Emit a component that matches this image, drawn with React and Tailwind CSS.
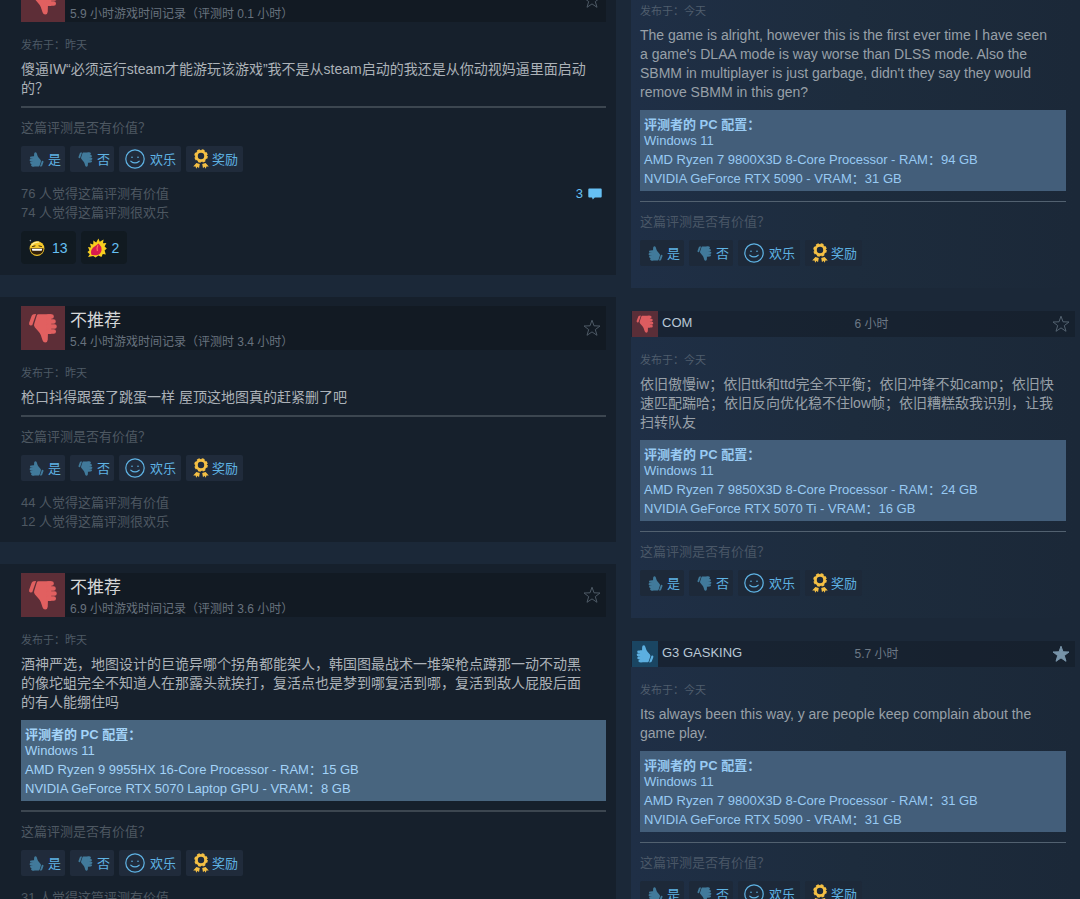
import React from 'react';
import clsx from 'clsx';

const mainReviews = [
  {
    id: 'm1',
    played: '5.9 小时游戏时间记录（评测时 0.1 小时）',
    posted: '昨天',
    text: '傻逼IW“必须运行steam才能游玩该游戏”我不是从steam启动的我还是从你动视妈逼里面启动\n的？',
    helpful: 76,
    funny: 74,
    comments: 3,
    awards: [{ kind: 'laugh', count: 13 }, { kind: 'fire', count: 2 }],
  },
  {
    id: 'm2',
    played: '5.4 小时游戏时间记录（评测时 3.4 小时）',
    posted: '昨天',
    text: '枪口抖得跟塞了跳蛋一样 屋顶这地图真的赶紧删了吧',
    helpful: 44,
    funny: 12,
  },
  {
    id: 'm3',
    played: '6.9 小时游戏时间记录（评测时 3.6 小时）',
    posted: '昨天',
    text: '酒神严选，地图设计的巨诡异哪个拐角都能架人，韩国图最战术一堆架枪点蹲那一动不动黑\n的像坨蛆完全不知道人在那露头就挨打，复活点也是梦到哪复活到哪，复活到敌人屁股后面\n的有人能绷住吗',
    specs: ['Windows 11', 'AMD Ryzen 9 9955HX 16-Core Processor - RAM：15 GB', 'NVIDIA GeForce RTX 5070 Laptop GPU - VRAM：8 GB'],
    helpful: 31,
    funny: 8,
  },
];

const sideReviews = [
  {
    id: 's1',
    name: 'Player',
    hours: '6 小时',
    posted: '今天',
    text: "The game is alright, however this is the first ever time I have seen\na game's DLAA mode is way worse than DLSS mode. Also the\nSBMM in multiplayer is just garbage, didn't they say they would\nremove SBMM in this gen?",
    specs: ['Windows 11', 'AMD Ryzen 7 9800X3D 8-Core Processor - RAM：94 GB', 'NVIDIA GeForce RTX 5090 - VRAM：31 GB'],
  },
  {
    id: 's2',
    name: 'COM',
    hours: '6 小时',
    posted: '今天',
    text: '依旧傲慢iw；依旧ttk和ttd完全不平衡；依旧冲锋不如camp；依旧快\n速匹配踹哈；依旧反向优化稳不住low帧；依旧糟糕敌我识别，让我\n扫转队友',
    specs: ['Windows 11', 'AMD Ryzen 7 9850X3D 8-Core Processor - RAM：24 GB', 'NVIDIA GeForce RTX 5070 Ti - VRAM：16 GB'],
  },
  {
    id: 's3',
    name: 'G3 GASKING',
    hours: '5.7 小时',
    posted: '今天',
    up: true,
    starred: true,
    text: 'Its always been this way, y are people keep complain about the\ngame play.',
    specs: ['Windows 11', 'AMD Ryzen 7 9800X3D 8-Core Processor - RAM：31 GB', 'NVIDIA GeForce RTX 5090 - VRAM：31 GB'],
  },
];

const Thumb = ({ up, className }) => (
  <svg viewBox="7 7 31 31" className={clsx(className, up && 'rotate-180')} aria-hidden="true">
    <path d="M12.8 8.2 15.4 8 11.4 19.6 9.4 19.8Q7.5 19.4 8.2 17L10.8 9.8Q11.5 8.2 12.8 8.2Z" fill="currentColor" />
    <path
      d="M17.6 8.2H31V28.6H27.6L27.4 34.6Q27.2 37.4 24.8 37.6Q22.8 37.6 22 35.2L20.2 29.8Q19.4 27.6 17.4 25.6L14 21.6Q12.8 20 13.4 18.4L16.2 9.4Q16.6 8.2 17.6 8.2Z"
      fill="currentColor"
    />
    <g stroke="currentColor" strokeWidth="4.7" strokeLinecap="round">
      <path d="M28 10.6H31.4M28 15.8H33.4M28 21H34.4M28 26.2H33.6" />
    </g>
  </svg>
);

const Smiley = () => (
  <svg viewBox="0 0 20 20" className="size-5" fill="none" stroke="currentColor" aria-hidden="true">
    <circle cx="10" cy="10" r="9.2" strokeWidth="1.2" />
    <circle cx="7" cy="8.2" r="0.8" fill="currentColor" stroke="none" />
    <circle cx="13" cy="8.2" r="0.8" fill="currentColor" stroke="none" />
    <path d="M5.8 12.2Q10 15.6 14.2 12.2" strokeWidth="1.1" strokeLinecap="round" />
  </svg>
);

const Rosette = () => (
  <svg viewBox="0 0 16 20" className="h-5 w-4 text-[#f5c044]" aria-hidden="true">
    <circle cx="8" cy="7" r="4.6" fill="none" stroke="currentColor" strokeWidth="2.8" />
    <circle cx="8" cy="7" r="6" fill="none" stroke="currentColor" strokeWidth="1.6" strokeDasharray="2.8 1.91" />
    <path d="M3.4 14 6.8 15 6 19.2 4.6 17.8 3.2 19.8 2.6 17.5 0.2 17.4Z" fill="currentColor" />
    <path d="M12.6 14 9.2 15 10 19.2 11.4 17.8 12.8 19.8 13.4 17.5 15.8 17.4Z" fill="currentColor" />
  </svg>
);

const Star = ({ filled }) => (
  <svg viewBox="0 0 18 18" className="size-[18px]" aria-hidden="true">
    <path
      d="M9 1.2 11 6.8 17 7 12.3 10.6 14 16.3 9 12.9 4 16.3 5.7 10.6 1 7 7 6.8Z"
      fill={filled ? 'currentColor' : 'none'}
      stroke="currentColor"
      strokeWidth="1"
    />
  </svg>
);

const Laugh = () => (
  <svg viewBox="0 0 20 20" className="size-5" aria-hidden="true">
    <circle cx="10" cy="10.6" r="7.4" fill="#f6c92c" />
    <path d="M4.4 7.4Q7.6 3.4 12 4.2" stroke="#fff0a0" strokeWidth="1.2" fill="none" />
    <path d="M5.2 8.6 8.4 7.8M11.6 7.8 14.8 8.6" stroke="#33210b" strokeWidth="1" />
    <path d="M3.4 10.2H16.6Q16.4 16.6 10 16.7Q3.6 16.6 3.4 10.2Z" fill="#33210b" />
    <path d="M4.8 10.7H15.2L14.7 12.7H5.3Z" fill="#fff" />
    <circle cx="3.4" cy="2.6" r="0.8" fill="#8b949c" />
  </svg>
);

const Fire = () => (
  <svg viewBox="0 0 20 20" className="size-5" aria-hidden="true">
    <path
      d="M1 19 2.8 16.2 0.4 14 2.4 12.4 1 9 4 9.4 3 5.6 6.2 6.6 6.4 2.4 9.2 4.4 11.4 0.6 12.8 3.8 16.6 1.4 16 5.2 19.4 5 17.6 8.4 19.8 10.6 17.6 12.6 18.8 16.4 15.8 16 14.4 19 11.4 17.6 8.6 19.6 6.2 18Z"
      fill="#f8cf1f"
    />
    <path d="M4.6 17Q2.8 13 6.2 9.6L11.6 5.6Q14.8 8.6 14.6 12Q13.8 16.8 9.4 17.2Z" fill="#d81b50" />
    <path d="M11 7.2Q9.4 9.6 10.4 13" stroke="#ff7a5c" strokeWidth="1.1" fill="none" />
  </svg>
);

const Bubble = () => (
  <svg viewBox="0 0 14 12" className="h-3 w-3.5" fill="currentColor" aria-hidden="true">
    <path d="M1.2 0.4H12.8Q13.7 0.4 13.7 1.4V8.4Q13.7 9.4 12.8 9.4H6.8L4.8 11.6 4 9.4H1.2Q0.3 9.4 0.3 8.4V1.4Q0.3 0.4 1.2 0.4Z" />
  </svg>
);

const StarButton = ({ filled, className }) => (
  <button type="button" aria-label="收藏" className={className}>
    <Star filled={filled} />
  </button>
);

const voteBase = 'flex h-[26px] items-center rounded-xs text-[13px] leading-none text-[#5fb3e4]';

const VoteButtons = ({ side }) => {
  const cls = clsx(voteBase, side ? 'bg-[#1d2939]' : 'bg-[#202b3b]');
  return (
    <div className="mt-[9px] flex gap-[5px]">
      <button type="button" className={clsx(cls, 'gap-1 pr-1 pl-2')}>
        <Thumb up className="size-[15px] text-[#417a9b]" />
        是
      </button>
      <button type="button" className={clsx(cls, 'gap-1 pr-1 pl-2')}>
        <Thumb className="size-[15px] text-[#417a9b]" />
        否
      </button>
      <button type="button" className={clsx(cls, 'gap-[5px] pr-[5px] pl-[6px]')}>
        <Smiley />
        欢乐
      </button>
      <button type="button" className={clsx(cls, 'gap-[3px] pr-[5px] pl-[7px]')}>
        <Rosette />
        奖励
      </button>
    </div>
  );
};

// Shared by both columns: date, text, hardware box and the vote row
const ReviewContent = ({ review, side }) => (
  <>
    <p className={clsx('pt-4 text-[11px] leading-[14px]', side ? 'text-[#4f5d6d]' : 'text-[#4e5a66]')}>
      发布于：{review.posted}
    </p>
    <p className={clsx('mt-2 text-sm leading-[19px] whitespace-pre-line', side ? 'text-[#98a0a8]' : 'text-[#acb2b8]')}>
      {review.text}
    </p>
    {review.specs && (
      <div
        className={clsx(
          'mt-2 mb-[9px] px-1 pt-2 pb-[3px] text-[13px] leading-[19px]',
          side ? 'bg-[#435e7a] text-[#98caf3]' : 'bg-[#48657f] text-[#a3d3f8]'
        )}
      >
        <h4 className="leading-[13px] font-bold">评测者的 PC 配置：</h4>
        {review.specs.map((line) => (
          <p key={line}>{line}</p>
        ))}
      </div>
    )}
    <hr className={clsx(side ? 'mt-[10px] border-t border-[#526170]' : 'mt-2 border-t-2 border-[#3c4650]')} />
    <p className={clsx('mt-[10px] text-[13px] leading-[19px]', side ? 'text-[#4a5767]' : 'text-[#4e5862]')}>
      这篇评测是否有价值？
    </p>
    <VoteButtons side={side} />
  </>
);

const MainReview = ({ review }) => (
  <article className="bg-[#16202c] pt-[9px] pr-[10px] pb-[11px] pl-[21px]">
    <header className="flex h-11 bg-[#121a23]">
      <div className="flex size-11 items-center justify-center bg-[#5d2e37]">
        <Thumb className="size-[30px] text-[#e16060]" />
      </div>
      <div className="flex-1 pt-1 pl-[5px]">
        <h3 className="text-[17px] leading-[22px] text-[#d6d7d8]">不推荐</h3>
        <p className="text-xs leading-[20px] text-[#68727e]">{review.played}</p>
      </div>
      <StarButton className="mr-[5px] text-[#4d5965]" />
    </header>
    <ReviewContent review={review} />
    <div className="mt-3 flex items-start justify-between text-[13px] leading-[19px] text-[#4e5862]">
      <div>
        <p>{review.helpful} 人觉得这篇评测有价值</p>
        <p>{review.funny} 人觉得这篇评测很欢乐</p>
      </div>
      {review.comments && (
        <a href="#comments" className="mr-1 flex items-center gap-[5px] text-[#66c0f4]">
          {review.comments}
          <Bubble />
        </a>
      )}
    </div>
    {review.awards && (
      <div className="mt-[9px] flex gap-[5px]">
        {review.awards.map((award) => (
          <button
            key={award.kind}
            type="button"
            className="flex h-[33px] items-center gap-[5px] rounded bg-[#111a21] pr-2 pl-[6px] text-sm text-[#66c0f4]"
          >
            {award.kind === 'laugh' ? <Laugh /> : <Fire />}
            {award.count}
          </button>
        ))}
      </div>
    )}
  </article>
);

const SideReview = ({ review }) => (
  <article className="bg-linear-to-r from-[#1f2f46] via-[#1d2c3d] to-[#1b2838] pb-[22px]">
    <header className="grid h-[26px] grid-cols-2 items-center bg-[#141d28]/60 pl-px">
      <div className="flex gap-1">
        <div className={clsx('flex size-[26px] items-center justify-center', review.up ? 'bg-[#1a4562]' : 'bg-[#5a2e38]')}>
          <Thumb up={review.up} className={clsx('size-[18px]', review.up ? 'text-[#5cafe0]' : 'text-[#dc5c60]')} />
        </div>
        <a href="#profile" className="text-[13px] leading-[23px] text-[#b9c8d6]">{review.name}</a>
      </div>
      <div className="flex items-center justify-between pl-px">
        <span className="text-xs text-[#6d7986]">{review.hours}</span>
        <StarButton filled={review.starred} className={clsx('mr-[5px]', review.starred ? 'text-[#7793a8]' : 'text-[#536270]')} />
      </div>
    </header>
    <div className="pr-[9px] pl-[9px]">
      <ReviewContent review={review} side />
    </div>
  </article>
);

const App = () => (
  <main className="h-screen overflow-hidden bg-[#1b2838] font-['Liberation_Sans','Noto_Sans_CJK_SC',sans-serif]">
    <div className="grid grid-cols-[616fr_444fr] items-start gap-[15px] pr-[5px]">
      <section className="-mt-[31px] flex flex-col gap-[22px]">
        {mainReviews.map((r) => (
          <MainReview key={r.id} review={r} />
        ))}
      </section>
      <section className="-mt-[38px] flex flex-col gap-[23px]">
        {sideReviews.map((r) => (
          <SideReview key={r.id} review={r} />
        ))}
      </section>
    </div>
  </main>
);

export default App;
